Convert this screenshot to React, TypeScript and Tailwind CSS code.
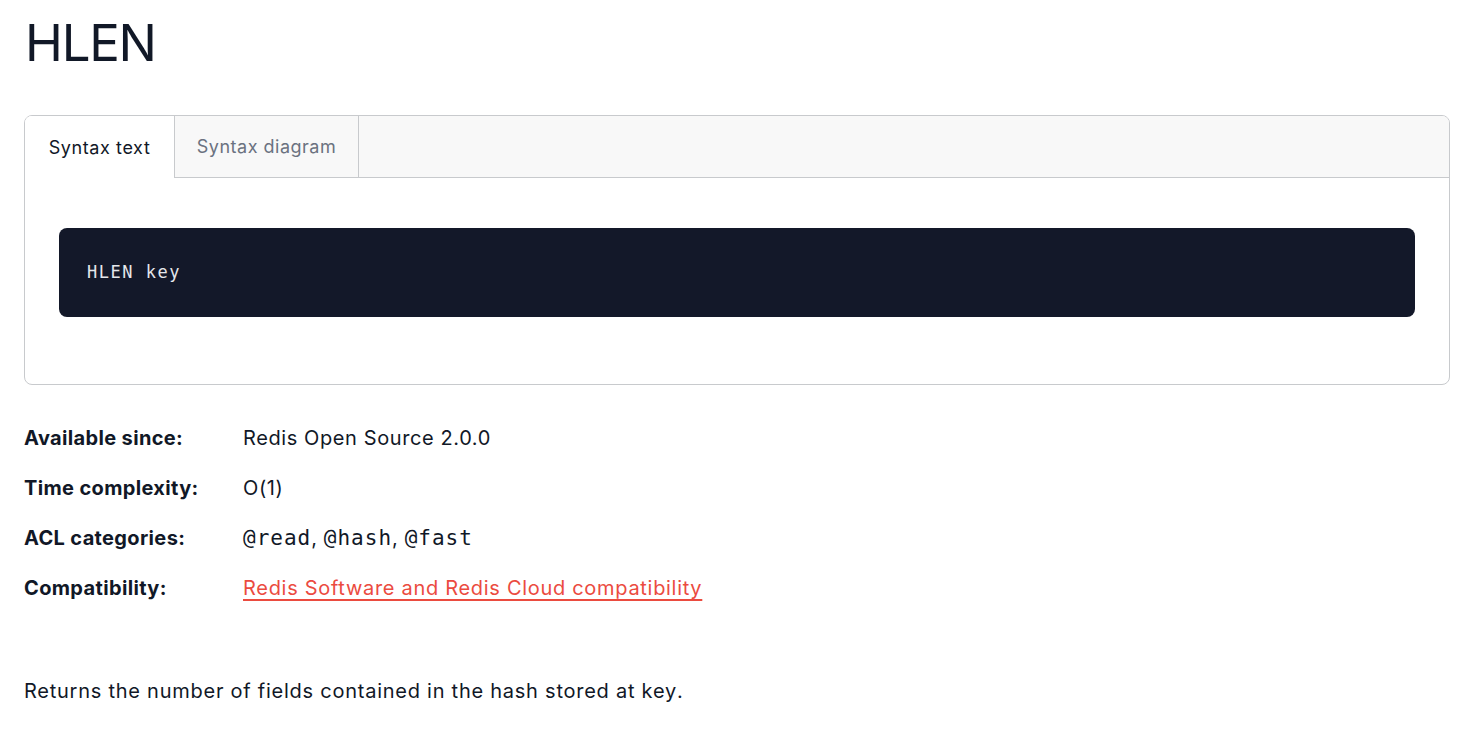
export default function App() {
    const mono = { fontFamily: "'DejaVu Sans Mono', monospace" };
    const rows = [
        { label: "Available since:", value: "Redis Open Source 2.0.0" },
        { label: "Time complexity:", value: "O(1)" },
    ];

    return (
        <div className="min-h-screen bg-white text-[#111827] px-[24px] pt-[12px]" style={{ fontFamily: "Inter, 'Noto Sans', sans-serif" }}>
            {/* Title */}
            <h1 className="text-[51px] leading-[62px] font-normal tracking-tight mb-[41px] pl-[1px]">HLEN</h1>

            {/* Tabs */}
            <div className="border border-[#c8cacd] rounded-[8px] overflow-hidden">
                <div className="flex bg-[#f8f8f8] border-b border-[#c8cacd] h-[62px]">
                    <div className="bg-white w-[150px] border-r border-[#c8cacd] -mb-[1px] flex items-center justify-center text-[18px] tracking-[0.6px] text-[#111827]">
                        Syntax text
                    </div>
                    <div className="w-[184px] border-r border-[#c8cacd] flex items-center justify-center text-[18px] tracking-[0.5px] text-[#6b7280]">
                        Syntax diagram
                    </div>
                </div>
                <div className="pt-[50px] pb-[67px] px-[34px]">
                    <div className="bg-[#131829] rounded-[8px] h-[89px] flex items-center px-[28px]">
                        <code className="text-[17px] tracking-[1.5px] text-[#e5e7eb]" style={mono}>HLEN key</code>
                    </div>
                </div>
            </div>

            {/* Metadata */}
            <div className="mt-[38px] flex flex-col gap-[20px] text-[20px] leading-[30px] tracking-[0.6px]">
                {rows.map((r, i) => (
                    <div key={i} className="flex">
                        <div className="w-[219px] font-bold tracking-[0.35px]">{r.label}</div>
                        <div>{r.value}</div>
                    </div>
                ))}
                <div className="flex">
                    <div className="w-[219px] font-bold tracking-[0.35px]">ACL categories:</div>
                    <div>
                        <code style={mono} className="text-[21px] tracking-[1px]">@read</code>,{" "}
                        <code style={mono} className="text-[21px] tracking-[1px]">@hash</code>,{" "}
                        <code style={mono} className="text-[21px] tracking-[1px]">@fast</code>
                    </div>
                </div>
                <div className="flex">
                    <div className="w-[219px] font-bold tracking-[0.35px]">Compatibility:</div>
                    <a href="#" className="text-[#eb4b3f] underline underline-offset-[4px] tracking-[0.7px]">Redis Software and Redis Cloud compatibility</a>
                </div>
            </div>

            {/* Description */}
            <p className="mt-[73px] text-[20px] leading-[30px] tracking-[0.75px]">
                Returns the number of fields contained in the hash stored at <code style={{ fontFamily: "Inter, sans-serif" }}>key</code>.
            </p>
        </div>
    );
}
